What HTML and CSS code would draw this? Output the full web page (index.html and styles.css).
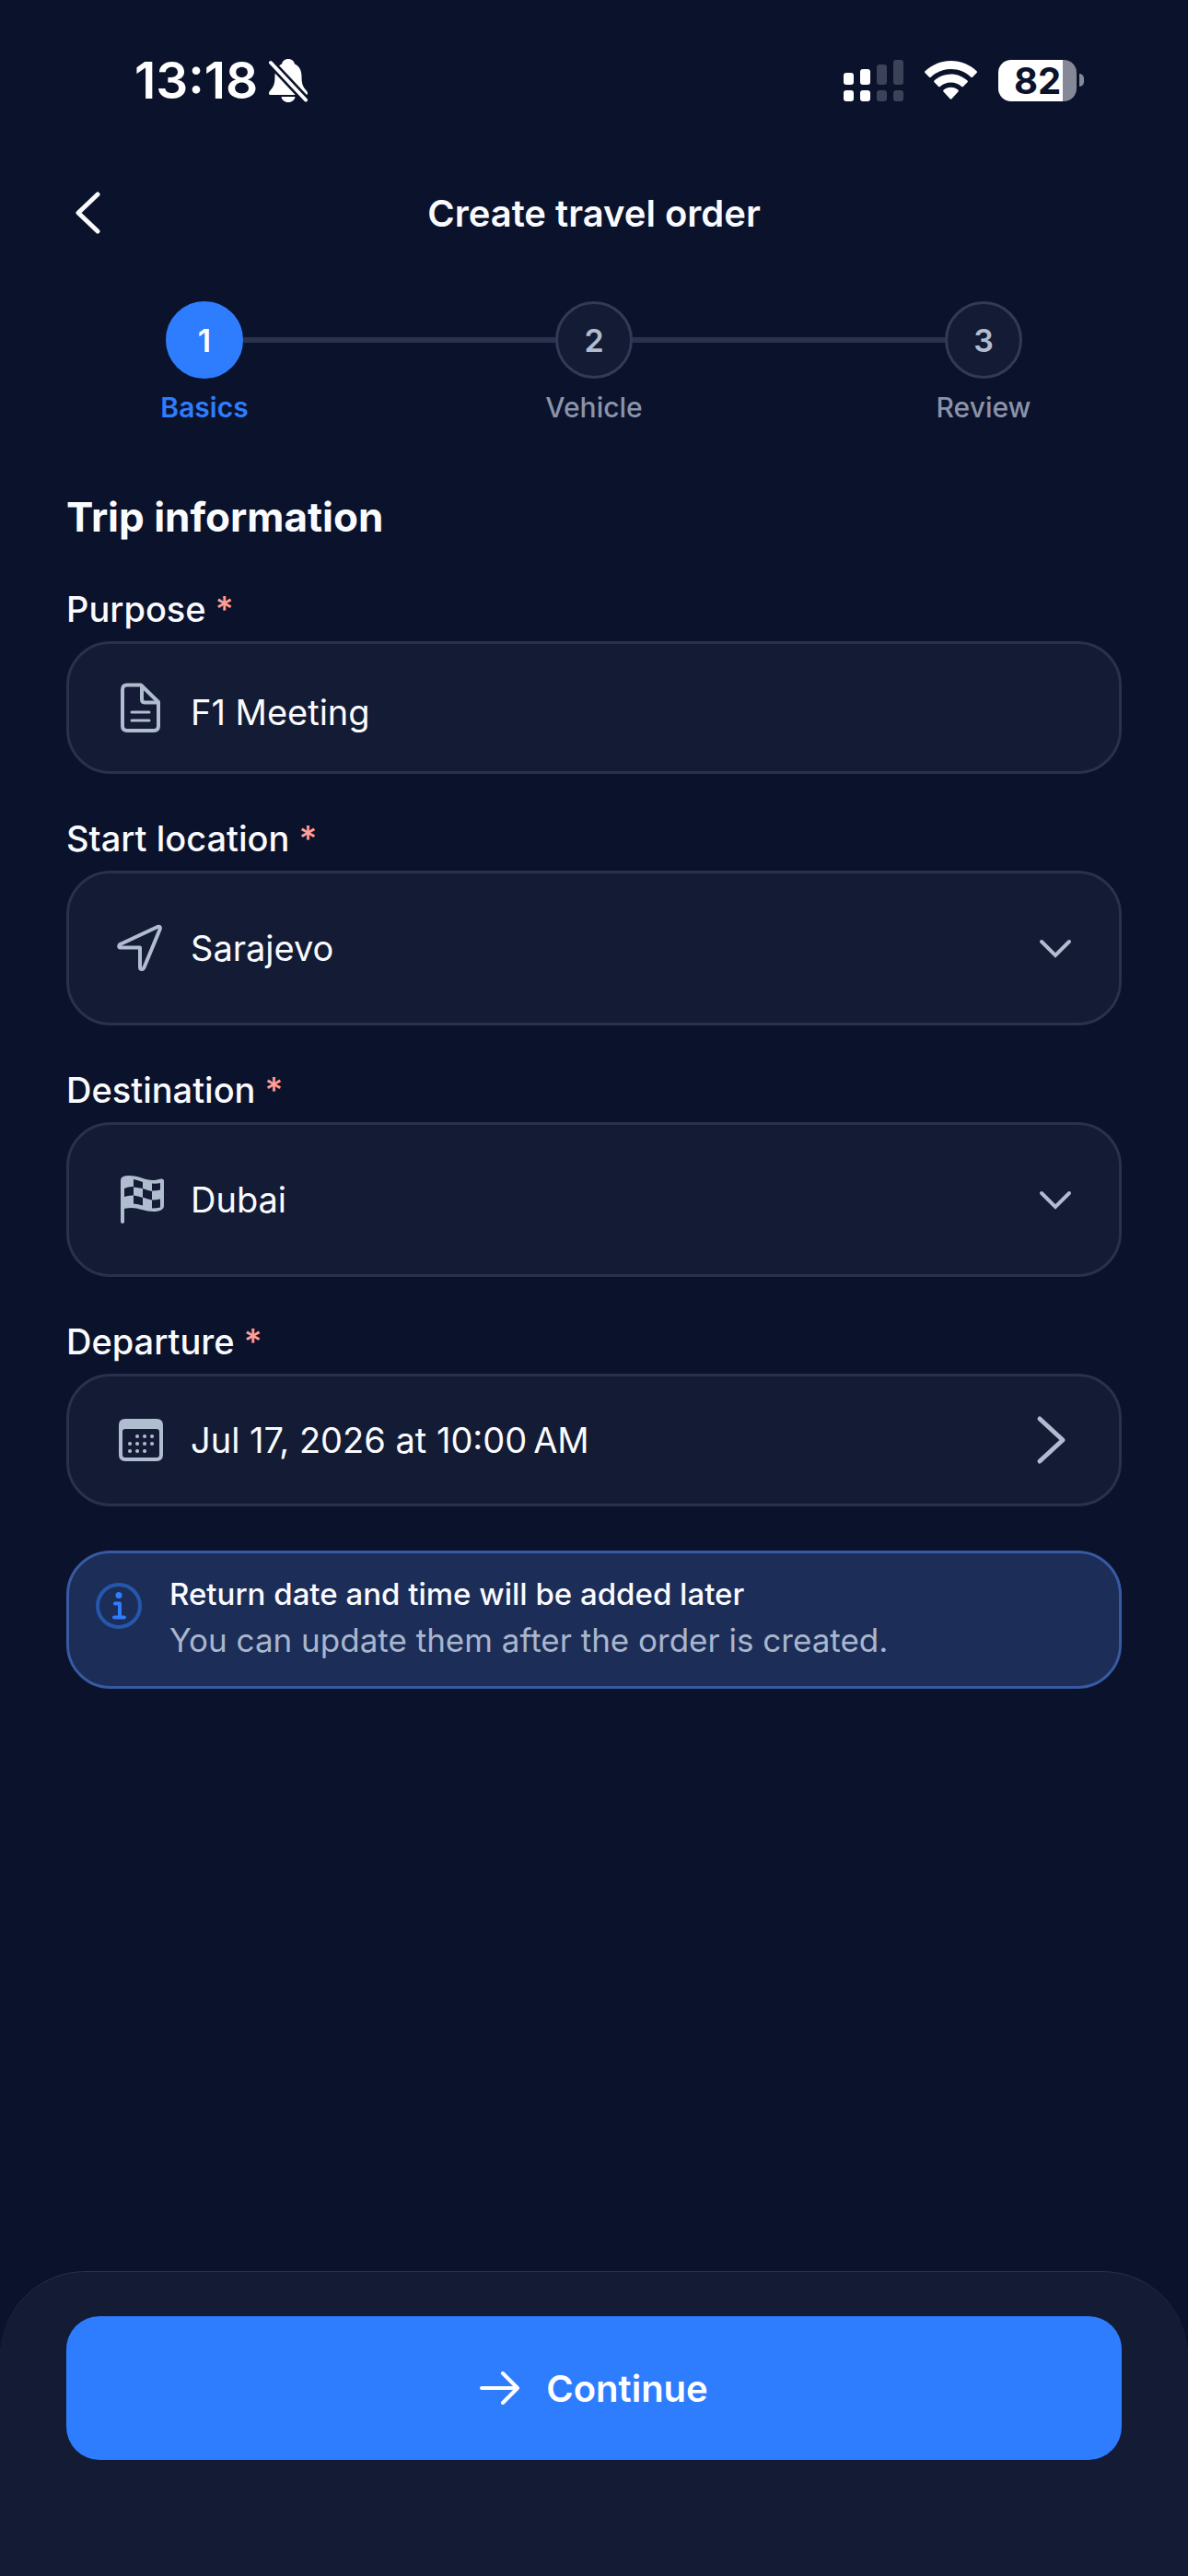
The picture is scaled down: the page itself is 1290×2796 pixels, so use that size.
FILE: index.html
```html
<!DOCTYPE html>
<html lang="en">
<head>
  <meta charset="UTF-8">
  <meta name="viewport" content="width=device-width, initial-scale=1">
  <title>Create travel order</title>
  <link rel="stylesheet" href="styles.css">
</head>
<body>
  <!-- Status bar -->
  <div class="status-bar">
    <div class="status-left">
      <span class="status-time">13:18</span>
      <svg class="status-bell" viewBox="0 0 42 47" aria-hidden="true">
        <path d="M21 0c-4 0-6.500 2.500-7 5.500C8.500 8 6.500 13 6.500 19c0 8-1.500 11-4.500 14.500-1.500 1.700-2 2.500-2 4C0 38.500 1 39 2.500 39h37c1.500 0 2.500-.5 2.500-1.500 0-1.500-.5-2.300-2-4C37 30 35.500 27 35.500 19c0-6-2-11-7.500-13.500C27.500 2.500 25 0 21 0z" fill="#fff"/>
        <path d="M13.500 41h15c-.5 3.500-3.500 6-7.500 6s-7-2.500-7.500-6z" fill="#fff"/>
        <path d="M2 4l38 40.500" stroke="#0b122b" stroke-width="9"/>
        <path d="M2 4l38 40.500" stroke="#fff" stroke-width="4" stroke-linecap="round"/>
      </svg>
    </div>
    <div class="status-right">
      <svg class="status-signal" viewBox="0 0 65 45" fill="#fff" aria-hidden="true">
        <rect x="0" y="14" width="11" height="13" rx="3"/>
        <rect x="18" y="10" width="11" height="17" rx="3"/>
        <rect x="0" y="33" width="11" height="12" rx="3"/>
        <rect x="18" y="33" width="11" height="12" rx="3"/>
        <g fill="#3c4257">
          <rect x="36" y="5" width="11" height="22" rx="3"/>
          <rect x="54" y="0" width="11" height="27" rx="3"/>
          <rect x="36" y="33" width="11" height="12" rx="3"/>
          <rect x="54" y="33" width="11" height="12" rx="3"/>
        </g>
      </svg>
      <svg class="status-wifi" viewBox="0 0 57 42" fill="#fff" aria-hidden="true">
        <path d="M28.500 0C17.500 0 7.500 4.300.4 11.300c-.5.500-.5 1.200 0 1.700l4.600 4.700c.5.500 1.200.5 1.700 0C12.300 12.400 20 9 28.500 9s16.200 3.400 21.800 8.700c.5.500 1.200.5 1.700 0l4.600-4.700c.5-.5.500-1.200 0-1.700C49.500 4.300 39.500 0 28.500 0z"/>
        <path d="M28.500 14.500c-7 0-13.300 2.700-18 7.100-.5.500-.5 1.200 0 1.700l4.600 4.600c.5.500 1.200.5 1.700 0 3.100-2.800 7.200-4.500 11.700-4.500s8.600 1.700 11.700 4.500c.5.500 1.200.5 1.700 0l4.600-4.600c.5-.5.500-1.200 0-1.700-4.700-4.400-11-7.100-18-7.100z"/>
        <path d="M28.500 28.700c-3.100 0-5.900 1.200-8 3.100-.5.500-.5 1.200 0 1.700l7.100 7.800c.5.500 1.300.5 1.800 0l7.100-7.800c.5-.5.500-1.200 0-1.700-2.100-1.900-4.900-3.100-8-3.100z"/>
      </svg>
      <div class="battery">
        <div class="battery-body">82</div>
        <div class="battery-tip"></div>
      </div>
    </div>
  </div>

  <header class="header">
    <button class="back-button" type="button" aria-label="Back">
      <svg viewBox="0 0 27 46" fill="none" stroke="#fafbff" stroke-width="5" stroke-linecap="round" stroke-linejoin="round" aria-hidden="true">
        <path d="M24 3L3 23l21 20"/>
      </svg>
    </button>
    <h1>Create travel order</h1>
  </header>

  <!-- Progress steps -->
  <ol class="steps">
    <li class="step active">
      <span class="step-circle">1</span>
      <span class="step-label">Basics</span>
    </li>
    <li class="step-line" aria-hidden="true"></li>
    <li class="step">
      <span class="step-circle">2</span>
      <span class="step-label">Vehicle</span>
    </li>
    <li class="step-line" aria-hidden="true"></li>
    <li class="step">
      <span class="step-circle">3</span>
      <span class="step-label">Review</span>
    </li>
  </ol>

  <main class="content">
    <h2>Trip information</h2>
    <form class="trip-form" id="trip-form">
      <div class="field">
        <label for="purpose">Purpose <span class="required">*</span></label>
        <div class="control">
          <svg class="icon" viewBox="0 0 54 54" fill="none" stroke="#b0bccf" stroke-width="4" stroke-linejoin="round" aria-hidden="true">
            <path d="M12 2.500h15L46 21v26q0 5-5 5H12q-5 0-5-5V7.500q0-5 5-5z"/>
            <path d="M28 3v15q0 3.500 3.500 3.500H46"/>
            <path d="M17 32h19M17 41h19" stroke-width="3" stroke-linecap="round"/>
          </svg>
          <input class="purpose-input" type="text" id="purpose" value="F1 Meeting">
        </div>
      </div>

      <div class="field">
        <label for="start">Start location <span class="required">*</span></label>
        <div class="control tall">
          <svg class="icon" viewBox="0 0 54 54" fill="none" stroke="#b0bccf" stroke-width="4" stroke-linejoin="round" aria-hidden="true">
            <path d="M3.500 24Q2.500 26.500 5 26.500H26V48q0 2.500 2.500 2 1.300-.3 2-2L47.500 7q1.500-4-2.500-3L5.500 22.500q-1.500.5-2 1.500z"/>
          </svg>
          <select id="start">
            <option>Sarajevo</option>
          </select>
          <svg class="icon chevron" viewBox="0 0 54 54" fill="none" stroke="#b0bccf" stroke-width="4" stroke-linecap="round" aria-hidden="true">
            <path d="M12 20l15 15 15-15"/>
          </svg>
        </div>
      </div>

      <div class="field">
        <label for="destination">Destination <span class="required">*</span></label>
        <div class="control tall">
          <svg class="icon" viewBox="0 0 54 54" fill="#b0bccf" aria-hidden="true">
            <path fill-rule="evenodd" d="M5 6Q5 1 14 1c11 0 17 5 26 5 5 0 7-1.500 9.500-1.500Q52 4.500 52 7v27q0 5-9 6-7 .5-15-2-9-3-17-1.500L9 37v14q0 2-2 2t-2-2zM9 15v9q5-2 10-1.500v9q5 .5 10 2v-9q5 2 10 3v9q5 0 9-1v-9q-4 1-9 1v-10q5 0 9-1V9q-4 1-9 .5v8.500q-5-1-10-3v-7q-5-2-10-3v8q-5-.5-10 2zM19 13.500q5 .5 10 1.500v10q-5-2-10-2.500z"/>
          </svg>
          <select id="destination">
            <option>Dubai</option>
          </select>
          <svg class="icon chevron" viewBox="0 0 54 54" fill="none" stroke="#b0bccf" stroke-width="4" stroke-linecap="round" aria-hidden="true">
            <path d="M12 20l15 15 15-15"/>
          </svg>
        </div>
      </div>

      <div class="field">
        <label for="departure">Departure <span class="required">*</span></label>
        <button class="control" type="button" id="departure">
          <svg class="icon" viewBox="0 0 54 54" fill="#b0bccf" aria-hidden="true">
            <path fill-rule="evenodd" d="M10 4h34q7 0 7 7v32q0 7-7 7H10q-7 0-7-7V11q0-7 7-7zM10 15q-3 0-3 3v25q0 3 3 3h34q3 0 3-3V18q0-3-3-3z"/>
            <path d="M23 23h.1M31 23h.1M39 23h.1M15 31h.1M23 31h.1M31 31h.1M39 31h.1M15 39h.1M23 39h.1M31 39h.1" stroke="#b0bccf" stroke-width="4" stroke-linecap="round"/>
          </svg>
          <span class="control-value">Jul 17, 2026 at 10:00&#8239;AM</span>
          <svg class="icon" viewBox="0 0 54 54" fill="none" stroke="#b0bccf" stroke-width="5" stroke-linecap="round" stroke-linejoin="round" aria-hidden="true">
            <path d="M10 4l25 23-25 23"/>
          </svg>
        </button>
      </div>
    </form>

    <div class="info-box">
      <svg class="info-icon" viewBox="0 0 50 50" fill="none" aria-hidden="true">
        <circle cx="25" cy="25" r="23" stroke="#2557ad" stroke-width="4"/>
        <circle cx="25" cy="13.500" r="3.500" fill="#2e7dff"/>
        <path d="M21 22.500h5v15M20 37.500h11" stroke="#2e7dff" stroke-width="4" stroke-linecap="round" stroke-linejoin="round"/>
      </svg>
      <div class="info-text">
        <p class="info-title">Return date and time will be added later</p>
        <p>You can update them after the order is created.</p>
      </div>
    </div>
  </main>

  <footer class="footer">
    <button class="button" type="submit" form="trip-form">
      <svg class="button-icon" viewBox="0 0 44 36" fill="none" stroke="#fff" stroke-width="4" stroke-linecap="round" stroke-linejoin="round" aria-hidden="true">
        <path d="M2 18h39M25 2l16 16-16 16"/>
      </svg>
      Continue
    </button>
  </footer>
</body>
</html>
```
FILE: styles.css
```css
/* Reset and base styles */
* {
  margin: 0;
  padding: 0;
  box-sizing: border-box;
}
body {
  min-height: 100vh;
  display: flex;
  flex-direction: column;
  background: #0b122b;
  color: #fafbff;
  font-family: Inter, "Liberation Sans", sans-serif;
  font-size: 38px;
}
button, input, select {
  font: inherit;
  color: inherit;
  border: none;
  background: none;
}
button {
  cursor: pointer;
}
svg {
  flex-shrink: 0;
}

/* Status bar */
.status-bar {
  display: flex;
  align-items: center;
  justify-content: space-between;
  height: 174px;
  padding: 0 113px 0 146px;
  color: #fff;
}
.status-left, .status-right {
  display: flex;
  align-items: center;
}
.status-left {
  gap: 12px;
}
.status-right {
  gap: 23px;
}
.status-time {
  font-size: 55px;
  font-weight: 600;
}
.status-bell {
  width: 42px;
  height: 47px;
}
.status-signal {
  width: 65px;
  height: 45px;
}
.status-wifi {
  width: 57px;
  height: 42px;
}
.battery {
  display: flex;
  align-items: center;
  gap: 3px;
}
.battery-body {
  width: 85px;
  height: 45px;
  border-radius: 14px;
  background: linear-gradient(to right, #fff 82%, #858997 82%);
  color: #0b122b;
  font-size: 40px;
  font-weight: 700;
  line-height: 45px;
  text-align: center;
}
.battery-tip {
  width: 5px;
  height: 14px;
  border-radius: 0 7px 7px 0;
  background: #858997;
}

/* Page header */
.header {
  display: grid;
  grid-template-columns: 100px 1fr 100px;
  align-items: center;
  height: 114px;
  padding: 0 72px;
}
.back-button {
  display: flex;
  padding: 10px;
}
.back-button svg {
  width: 27px;
  height: 46px;
}
.header h1 {
  font-size: 40px;
  font-weight: 600;
  text-align: center;
}

/* Progress steps */
.steps {
  display: flex;
  list-style: none;
  padding: 39px 180px 0;
}
.step {
  display: flex;
  flex-direction: column;
  align-items: center;
  gap: 12px;
  width: 84px;
}
.step-circle {
  display: flex;
  align-items: center;
  justify-content: center;
  width: 84px;
  height: 84px;
  border: 3px solid #313b58;
  border-radius: 50%;
  background: #141b34;
  color: #b0bccf;
  font-size: 34px;
  font-weight: 600;
}
.step-label {
  color: #8a93aa;
  font-size: 30px;
  font-weight: 500;
  line-height: 38px;
}
.step.active .step-circle {
  border-color: #2e7dff;
  background: #2e7dff;
  color: #fff;
}
.step.active .step-label {
  color: #2e7dff;
  font-weight: 600;
}
.step-line {
  flex: 1;
  height: 6px;
  margin-top: 39px;
  background: #2a314c;
}

/* Trip form */
.content {
  flex: 1;
  padding: 72px 72px 48px;
}
.content h2 {
  margin-bottom: 50px;
  font-size: 44px;
  font-weight: 700;
  line-height: 56px;
}
.trip-form {
  display: flex;
  flex-direction: column;
  gap: 48px;
}
.field {
  display: flex;
  flex-direction: column;
  gap: 12px;
}
.field label {
  font-weight: 500;
  line-height: 45px;
}
.required {
  color: #ff9f97;
}
.control {
  display: flex;
  align-items: center;
  gap: 27px;
  width: 100%;
  height: 144px;
  padding: 0 42px 0 51px;
  border: 3px solid #2a314c;
  border-radius: 48px;
  background: #141b34;
  text-align: left;
}
.control.tall {
  height: 168px;
}
.control input, .control select, .control-value {
  flex: 1;
  min-width: 0;
  outline: none;
}
.control select {
  appearance: none;
  height: 100%;
}
.purpose-input {
  padding-top: 10px;
}
.icon {
  width: 54px;
  height: 54px;
}
.chevron {
  pointer-events: none;
}

/* Info box */
.info-box {
  display: flex;
  gap: 30px;
  margin-top: 48px;
  padding: 19px 29px 25px;
  border: 3px solid #375aa3;
  border-radius: 48px;
  background: #1c2d57;
}
.info-icon {
  width: 50px;
  height: 50px;
  margin-top: 13px;
}
.info-text {
  color: #a9b6cd;
  font-size: 35px;
  line-height: 50px;
}
.info-title {
  color: #fafbff;
  font-size: 33px;
  font-weight: 500;
}

/* Bottom bar */
.footer {
  padding: 48px 72px 126px;
  border-top: 1px solid #2a314c;
  border-radius: 93px 93px 0 0;
  background: #141b34;
}
.button {
  display: flex;
  align-items: center;
  justify-content: center;
  gap: 28px;
  width: 100%;
  height: 156px;
  border-radius: 36px;
  background: #2e7dff;
  color: #fff;
  font-size: 40px;
  font-weight: 600;
}
.button-icon {
  width: 44px;
  height: 36px;
}
```
